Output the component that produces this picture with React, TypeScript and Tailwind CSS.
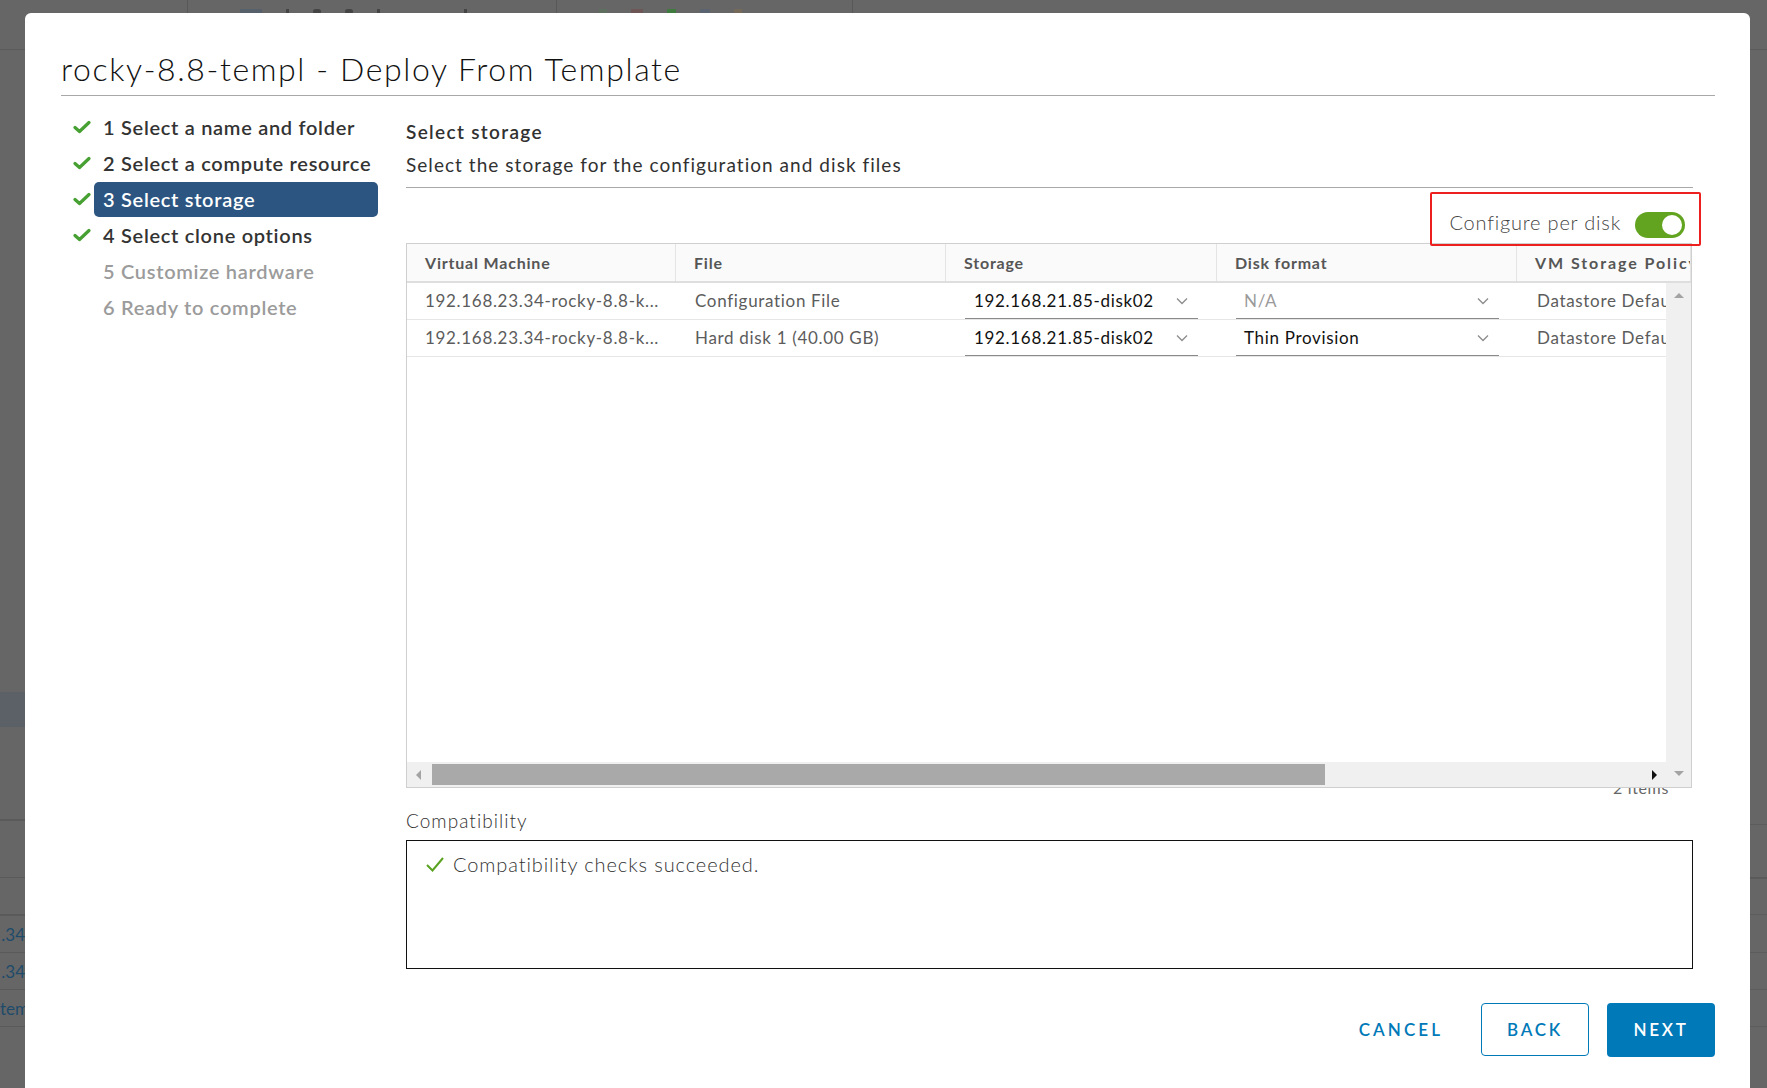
import React, { useState } from 'react'

const steps = [
  { n: 1, label: 'Select a name and folder', done: true },
  { n: 2, label: 'Select a compute resource', done: true },
  { n: 3, label: 'Select storage', done: true },
  { n: 4, label: 'Select clone options', done: true },
  { n: 5, label: 'Customize hardware', done: false },
  { n: 6, label: 'Ready to complete', done: false },
]

const rows = [
  { vm: '192.168.23.34-rocky-8.8-k...', file: 'Configuration File', storage: '192.168.21.85-disk02', format: 'N/A', disabled: true },
  { vm: '192.168.23.34-rocky-8.8-k...', file: 'Hard disk 1 (40.00 GB)', storage: '192.168.21.85-disk02', format: 'Thin Provision', disabled: false },
]

const StepCheck = () => (
  <svg width="18" height="14" viewBox="0 0 18 14">
    <path d="M2 7.5 L6.5 11.5 L16 2.5" fill="none" stroke="#46a032" strokeWidth="3.2" strokeLinecap="round" strokeLinejoin="round" />
  </svg>
)

const Chevron = () => (
  <svg width="12" height="8" viewBox="0 0 12 8">
    <path d="M1 1.5 L6 6.5 L11 1.5" fill="none" stroke="#8c8c8c" strokeWidth="1.3" />
  </svg>
)

const Tri = ({ dir, color }: { dir: 'l' | 'r' | 'u' | 'd'; color: string }) => {
  const d = {
    l: 'M7 1 L7 11 L2 6 Z',
    r: 'M3 1 L3 11 L8 6 Z',
    u: 'M1 8 L11 8 L6 3 Z',
    d: 'M1 3 L11 3 L6 8 Z',
  }[dir]
  return (
    <svg width="12" height="12" viewBox="0 0 12 12">
      <path d={d} fill={color} />
    </svg>
  )
}

const Background = () => (
  <div className="flex h-full flex-col">
    <div className="flex h-[50px] shrink-0 border-b border-[#5b5b5b]">
      <div className="w-[188px] border-r border-[#585858]" />
      <div className="flex w-[369px] items-start gap-[24px] border-r border-[#585858] pl-[52px] pt-[9px]">
        <span className="h-[5px] w-[22px] bg-[#55606a]" />
        <span className="h-[5px] w-[3px] bg-[#444]" />
        <span className="h-[5px] w-[8px] rounded-full bg-[#444]" />
        <span className="h-[5px] w-[8px] rounded-full bg-[#444]" />
        <span className="h-[5px] w-[3px] bg-[#444]" />
        <span className="ml-[60px] h-[5px] w-[3px] bg-[#444]" />
      </div>
      <div className="flex w-[296px] items-start gap-[24px] border-r border-[#585858] pl-[42px] pt-[9px]">
        <span className="h-[5px] w-[8px] bg-[#5f6f5f]" />
        <span className="h-[5px] w-[12px] bg-[#6e5656]" />
        <span className="h-[7px] w-[9px] bg-[#3f7a3f]" />
        <span className="h-[5px] w-[10px] bg-[#5a6370]" />
        <span className="h-[5px] w-[8px] bg-[#75695a]" />
      </div>
      <div className="flex-1" />
    </div>
    <div className="flex flex-1">
      <div className="flex w-[25px] flex-col overflow-hidden text-[17px] leading-[37px] text-[#1f4b6b]">
        <div className="h-[642px]" />
        <div className="h-[35px] bg-[#5c6167]" />
        <div className="h-[92px]" />
        <div className="h-[58px] border-t-2 border-[#5a5a5a]" />
        <div className="h-[37px] border-t border-[#5a5a5a]" />
        <div className="h-[38px] border-t-2 border-[#5a5a5a] text-right">.34</div>
        <div className="h-[37px] border-t border-[#5a5a5a] text-right">.34</div>
        <div className="h-[37px] border-t border-[#5a5a5a] whitespace-nowrap">tem</div>
        <div className="h-[37px] border-t border-[#5a5a5a]" />
      </div>
      <div className="flex-1" />
      <div className="flex w-[17px] flex-col">
        <div className="h-[774px]" />
        <div className="h-[53px] border-t border-[#5c5c5c]" />
        <div className="h-[37px] border-t-2 border-[#5a5a5a]" />
        <div className="h-[38px] border-t border-[#5c5c5c]" />
        <div className="h-[37px] border-t border-[#5c5c5c]" />
        <div className="h-[37px] border-t border-[#5c5c5c]" />
        <div className="flex-1 border-t border-[#5c5c5c]" />
      </div>
    </div>
  </div>
)

const Toggle = ({ on, onClick }: { on: boolean; onClick: () => void }) => (
  <button
    onClick={onClick}
    className={`flex h-[26px] w-[50px] items-center rounded-full px-[3px] ${on ? 'justify-end bg-[#62a420]' : 'justify-start bg-[#8c8c8c]'}`}
  >
    <span className="h-[20px] w-[20px] rounded-full bg-white" />
  </button>
)

const App: React.FC = () => {
  const [perDisk, setPerDisk] = useState(true)

  return (
    <div className="relative h-[1088px] w-[1767px] overflow-hidden bg-[#666] font-['Lato',sans-serif]">
      <Background />

      {/* modal dialog over the dimmed page */}
      <div className="absolute left-[25px] top-[13px] flex h-[1090px] w-[1725px] flex-col rounded-t-[6px] bg-white pl-[36px] pr-[35px]">
        <div className="border-b border-[#a8a8a8] pb-[10px] pt-[39px] text-[32px] font-light leading-[33px] tracking-[0.05em] text-[#111]">
          rocky-8.8-templ - Deploy From Template
        </div>

        <div className="flex">
          {/* steps */}
          <div className="flex w-[345px] shrink-0 flex-col pl-[12px] pt-[13px]">
            {steps.map((s) => (
              <div key={s.n} className="flex h-[36px] items-center">
                <div className="flex w-[21px] shrink-0 items-center">{s.done ? <StepCheck /> : null}</div>
                <div
                  className={`flex h-[35px] w-[284px] items-center whitespace-nowrap rounded-[5px] px-[9px] text-[20px] font-semibold tracking-[0.035em] ${
                    s.n === 3 ? 'bg-[#2c5581] text-white' : s.done ? 'text-[#333]' : 'text-[#9b9b9b]'
                  }`}
                >
                  {s.n} {s.label}
                </div>
              </div>
            ))}
          </div>

          {/* content */}
          <div className="flex w-[1287px] shrink-0 flex-col pt-[25px]">
            <div className="text-[19px] font-semibold leading-[22px] tracking-[0.07em] text-[#313131]">Select storage</div>
            <div className="mt-[11px] border-b border-[#a8a8a8] pb-[11px] text-[19px] leading-[22px] tracking-[0.055em] text-[#313131]">
              Select the storage for the configuration and disk files
            </div>

            <div className="relative flex h-[55px] items-end justify-end gap-[14px] pb-[5px] pr-[8px]">
              <span className="pb-[1px] text-[20px] font-light tracking-[0.04em] text-[#444]">Configure per disk</span>
              <Toggle on={perDisk} onClick={() => setPerDisk(!perDisk)} />
              <div className="pointer-events-none absolute -right-[8px] top-[4px] z-20 h-[54px] w-[271px] rounded-[2px] border-2 border-[#ee1f1f]" />
            </div>

            {/* datagrid */}
            <div className="relative z-10 flex h-[545px] w-[1286px] flex-col border border-[#cfcfcf] bg-white">
              <div className="flex h-[39px] shrink-0 border-b-2 border-[#dedede] bg-[#fafafa] text-[16px] font-bold tracking-[0.05em] text-[#565656]">
                <div className="flex w-[269px] items-center border-r border-[#e4e4e4] px-[18px]">Virtual Machine</div>
                <div className="flex w-[270px] items-center border-r border-[#e4e4e4] px-[18px]">File</div>
                <div className="flex w-[271px] items-center border-r border-[#e4e4e4] px-[18px]">Storage</div>
                <div className="flex w-[300px] items-center border-r border-[#e4e4e4] px-[18px]">Disk format</div>
                <div className="flex min-w-0 flex-1 items-center overflow-hidden whitespace-nowrap border-r border-[#e4e4e4] pl-[18px] tracking-[0.12em]">VM Storage Policy</div>
              </div>

              <div className="flex min-h-0 flex-1">
                <div className="flex min-w-0 flex-1 flex-col">
                  <div className="flex-1 overflow-hidden">
                    {rows.map((r, i) => (
                      <div key={i} className="flex h-[37px] border-b border-[#e6e6e6] text-[17px] tracking-[0.04em] text-[#5c5c5c]">
                        <div className="flex w-[269px] shrink-0 items-center whitespace-nowrap px-[18px]">{r.vm}</div>
                        <div className="flex w-[270px] shrink-0 items-center whitespace-nowrap px-[19px]">{r.file}</div>
                        <div className="flex w-[271px] shrink-0 pl-[19px]">
                          <div className="flex w-[233px] items-center justify-between border-b border-[#8a8a8a] pl-[9px] pr-[10px] text-[#111]">
                            <span>{r.storage}</span>
                            <Chevron />
                          </div>
                        </div>
                        <div className="flex w-[300px] shrink-0 pl-[19px]">
                          <div className={`flex w-[263px] items-center justify-between border-b border-[#8a8a8a] pl-[8px] pr-[10px] ${r.disabled ? 'text-[#9a9a9a]' : 'text-[#111]'}`}>
                            <span>{r.format}</span>
                            <Chevron />
                          </div>
                        </div>
                        <div className="flex shrink-0 items-center whitespace-nowrap pl-[20px]">Datastore Default</div>
                      </div>
                    ))}
                  </div>
                  <div className="flex h-[25px] shrink-0 items-center bg-[#f0f0f0]">
                    <div className="flex w-[25px] justify-center">
                      <Tri dir="l" color="#a3a3a3" />
                    </div>
                    <div className="h-[21px] w-[893px] bg-[#a9a9a9]" />
                    <div className="flex-1" />
                    <div className="flex w-[22px] justify-center">
                      <Tri dir="r" color="#111" />
                    </div>
                  </div>
                </div>
                <div className="flex w-[25px] shrink-0 flex-col items-center justify-between bg-[#f0f0f0] py-[7px]">
                  <Tri dir="u" color="#a3a3a3" />
                  <Tri dir="d" color="#a3a3a3" />
                </div>
              </div>
            </div>

            <div className="relative z-0 -mt-[10px] flex h-[20px] justify-end pr-[24px] text-[16px] leading-[20px] tracking-[0.04em] text-[#666]">
              2 items
            </div>

            <div className="mt-[12px] text-[19px] font-light leading-[22px] tracking-[0.055em] text-[#313131]">Compatibility</div>
            <div className="mt-[8px] flex h-[129px] items-start gap-[8px] border border-[#111] pl-[18px] pt-[12px]">
              <svg width="20" height="22" viewBox="0 0 20 22">
                <path d="M2 12 L7.5 17.5 L18 5" fill="none" stroke="#5aa220" strokeWidth="2" />
              </svg>
              <span className="text-[20px] font-light leading-[22px] tracking-[0.045em] text-[#333]">Compatibility checks succeeded.</span>
            </div>
          </div>
        </div>

        {/* footer */}
        <div className="mt-[34px] flex justify-end">
          <button className="mr-[13px] h-[53px] px-[25px] text-[17px] font-semibold tracking-[0.18em] text-[#0079b8]">CANCEL</button>
          <button className="mr-[18px] h-[53px] w-[108px] rounded-[4px] border border-[#0079b8] text-[17px] font-semibold tracking-[0.16em] text-[#0079b8]">
            BACK
          </button>
          <button className="h-[54px] w-[108px] rounded-[4px] bg-[#0079b8] text-[17px] font-semibold tracking-[0.16em] text-white">NEXT</button>
        </div>

        {/* resize grip */}
        <svg className="absolute bottom-[2px] right-[5px]" width="12" height="12" viewBox="0 0 12 12">
          <path d="M11 2 L2 11 M11 5 L5 11 M11 8 L8 11" stroke="#888" strokeWidth="1" />
        </svg>
      </div>
    </div>
  )
}

export default App
